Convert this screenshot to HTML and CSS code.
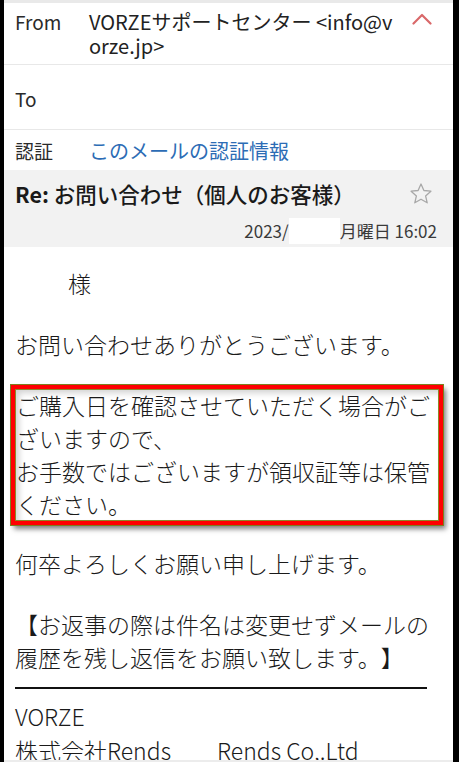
FILE: index.html
```html
<!DOCTYPE html>
<html lang="ja">
<head>
<meta charset="utf-8">
<title>Re: お問い合わせ（個人のお客様）</title>
<link rel="stylesheet" href="styles.css">
</head>
<body>
<div class="screen">
  <div class="hrow hrow-from">
    <div class="hlabel">From</div>
    <div class="hvalue sender">VORZEサポートセンター &lt;info@vorze.jp&gt;</div>
    <svg class="chev" width="20" height="12" viewBox="0 0 20 12"><path d="M1.5 10.5 L10 2 L18.5 10.5" fill="none" stroke="#d9686a" stroke-width="2.2" stroke-linecap="round" stroke-linejoin="round"/></svg>
  </div>
  <div class="hrow hrow-to">
    <div class="hlabel">To</div>
  </div>
  <div class="hrow hrow-auth">
    <div class="hlabel">認証</div>
    <div class="hvalue link">このメールの認証情報</div>
  </div>
  <div class="subject-band">
    <div class="subject-line">
      <div class="subject"><span class="re">Re:</span> お問い合わせ（個人のお客様）</div>
      <svg class="star" width="24" height="24" viewBox="0 0 24 24"><path d="M12 2 L14.9 8.5 L21.9 9.2 L16.6 13.9 L18.2 20.8 L12 17.2 L5.8 20.8 L7.4 13.9 L2.1 9.2 L9.1 8.5 Z" fill="none" stroke="#a8a8a8" stroke-width="1.3" stroke-linejoin="round"/></svg>
    </div>
    <div class="date-line"><span>2023/</span><span class="redact"></span><span>月曜日 16:02</span></div>
  </div>
  <div class="mail-body">
    <p class="para"><span class="name-blank"></span>様</p>
    <p class="para">お問い合わせありがとうございます。</p>
    <div class="notice">ご購入日を確認させていただく場合がございますので、<br>お手数ではございますが領収証等は保管ください。</div>
    <p class="para">何卒よろしくお願い申し上げます。</p>
    <p class="para para-last">【お返事の際は件名は変更せずメールの履歴を残し返信をお願い致します。】</p>
    <div class="rule"></div>
    <p class="sig">VORZE<br>株式会社Rends　　Rends Co,.Ltd</p>
  </div>
</div>
</body>
</html>
```

FILE: styles.css
```css
html, body {
  margin: 0;
  padding: 0;
  background: #000;
}
body {
  width: 459px;
  height: 762px;
  overflow: hidden;
}
.screen {
  box-sizing: border-box;
  margin-left: 4px;
  width: 449px;
  height: 762px;
  overflow: hidden;
  background: #fff;
  border-top: 3px solid #e9e9e9;
  border-bottom: 2px solid #ececec;
  font-family: "Noto Sans CJK JP", "Noto Sans", sans-serif;
  color: #1e1e1e;
  text-spacing-trim: space-all;
}
.hrow {
  display: flex;
  align-items: flex-start;
  font-size: 19px;
  line-height: 24px;
  padding-left: 11px;
  border-bottom: 1px solid #e8e8e8;
}
.hlabel {
  width: 74px;
  flex: none;
  color: #2a2a2a;
}
.hvalue {
  color: #222;
  font-size: 20px;
}
.hrow-from {
  padding-top: 7px;
  padding-bottom: 6px;
}
.sender {
  width: 308px;
  word-break: break-all;
}
.chev {
  margin-left: 15px;
  margin-top: 3px;
  flex: none;
}
.hrow-to {
  padding-top: 22px;
  padding-bottom: 18px;
}
.hrow-auth {
  padding-top: 9px;
  padding-bottom: 7px;
  border-bottom: none;
}
.link {
  color: #2c6cb5;
}
.subject-band {
  background: #f2f2f2;
  padding: 10px 16px 3px 11px;
}
.subject-line {
  display: flex;
  align-items: center;
  justify-content: space-between;
  height: 28px;
}
.subject {
  font-size: 21.5px;
  line-height: 28px;
  font-weight: 500;
  color: #1a1a1a;
}
.re {
  font-weight: 700;
}
.star {
  margin-right: 4px;
}
.date-line {
  margin-top: 10px;
  display: flex;
  justify-content: flex-end;
  align-items: center;
  font-size: 17px;
  line-height: 26px;
  color: #3a3a3a;
}
.redact {
  display: inline-block;
  width: 51px;
  height: 26px;
  background: #fff;
}
.mail-body {
  padding: 20px 11px 0 11px;
  font-size: 23px;
  line-height: 33px;
  font-weight: 300;
  color: #1a1a1a;
}
.para {
  margin: 0 0 28px 0;
}
.para-last {
  margin-bottom: 13px;
}
.name-blank {
  display: inline-block;
  width: 53px;
}
.notice {
  margin: -4px -1px 22px -4px;
  padding-left: 1px;
  border: 4px solid #f00;
  box-shadow: 0 0 0 1px #7e7e1e, 3px 4px 5px rgba(0, 0, 0, 0.5), inset 0 0 0 1px #8a8a2a, inset 4px 4px 6px rgba(0, 0, 0, 0.18);
}
.rule {
  width: 412px;
  height: 2px;
  background: #111;
  margin: 0 0 10px 0;
}
.sig {
  margin: 0;
  line-height: 34px;
}
```
